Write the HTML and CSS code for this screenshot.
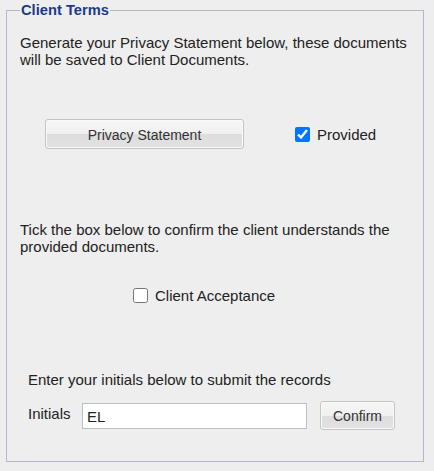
FILE: index.html
```html
<!DOCTYPE html>
<html>
<head>
<meta charset="utf-8">
<link rel="stylesheet" href="styles.css">
</head>
<body>
<fieldset class="terms">
  <legend class="terms-title">Client Terms</legend>
  <p class="text intro">Generate your Privacy Statement below, these documents will be saved to Client Documents.</p>
  <div class="row privacy-row">
    <button class="btn btn-wide" type="button">Privacy Statement</button>
    <label class="check"><input type="checkbox" checked><span>Provided</span></label>
  </div>
  <p class="text tick">Tick the box below to confirm the client understands the provided documents.</p>
  <div class="row accept-row">
    <label class="check"><input type="checkbox"><span>Client Acceptance</span></label>
  </div>
  <div class="submit">
    <p class="text submit-text">Enter your initials below to submit the records</p>
    <div class="row initials-row">
      <span class="initials-label">Initials</span>
      <input class="initials-input" type="text" value="EL">
      <button class="btn btn-small" type="button">Confirm</button>
    </div>
  </div>
</fieldset>
</body>
</html>
```
FILE: styles.css
```css
html, body {
  margin: 0;
  padding: 0;
  background: #eeeeee;
}
body {
  padding: 2px 10px 9px 6px;
  font-family: "Liberation Sans", Arial, sans-serif;
  color: #222;
}
.terms {
  margin: 0;
  width: 418px;
  box-sizing: border-box;
  height: 460px;
  border: 1px solid #b5b8cd;
  padding: 0 13px 0 13px;
  min-width: 0;
}
.terms-title {
  padding: 0 1px;
  margin-left: 0;
  font-size: 14.7px;
  font-weight: bold;
  color: #1c3a8a;
  line-height: 16px;
}
.text {
  margin: 0;
  font-size: 15px;
  line-height: 17px;
}
.intro {
  margin-top: 16px;
}
.row {
  display: flex;
  align-items: center;
}
.privacy-row {
  margin-top: 51px;
  padding-left: 25px;
}
.btn {
  font-family: "Liberation Sans", Arial, sans-serif;
  font-size: 14px;
  color: #333;
  border: 1px solid #c4c4c4;
  border-radius: 3px;
  background: linear-gradient(#f6f6f6 0%, #f0f0f0 50%, #dddddd 50%, #e2e2e2 100%);
  box-shadow: inset 0 0 0 1px #fafafa;
  padding: 1px 0 0;
  cursor: pointer;
}
.btn-wide {
  width: 199px;
  height: 30px;
}
.check {
  display: flex;
  align-items: center;
  font-size: 15px;
  color: #222;
}
.check input {
  width: 15px;
  height: 15px;
  margin: 0 7px 0 0;
}
.privacy-row .check {
  margin-left: 51px;
}
.tick {
  margin-top: 72px;
}
.accept-row {
  margin-top: 32px;
  padding-left: 113px;
}
.submit {
  margin-top: 67px;
  padding-left: 8px;
}
.initials-row {
  margin-top: 13px;
  align-items: center;
}
.initials-label {
  font-size: 15px;
  width: 54px;
  margin-top: -4px;
}
.initials-input {
  box-sizing: border-box;
  width: 225px;
  height: 26px;
  border: 1px solid #b9bdd0;
  background: #fff;
  padding: 0 4px;
  font-family: "Liberation Sans", Arial, sans-serif;
  font-size: 15px;
  color: #222;
  outline: none;
  margin-top: 1px;
}
.btn-small {
  width: 75px;
  height: 29px;
  margin-left: 13px;
}
```
